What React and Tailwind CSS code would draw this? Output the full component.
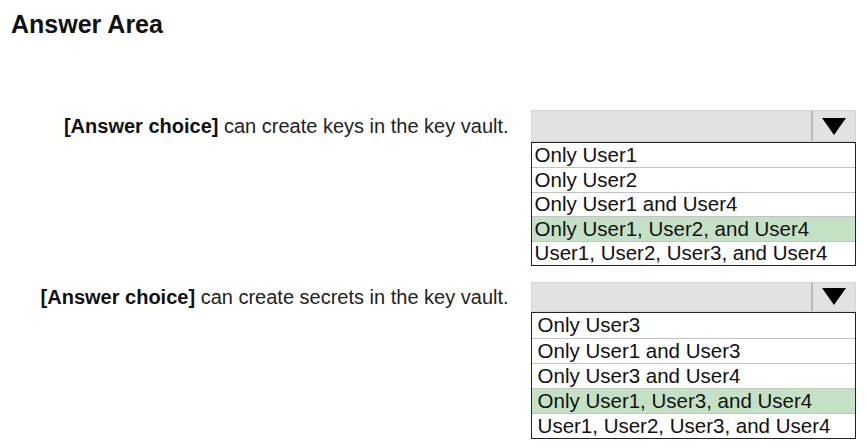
const questions = [
  {
    verb: "can create keys in the key vault.",
    options: [
      "Only User1",
      "Only User2",
      "Only User1 and User4",
      "Only User1, User2, and User4",
      "User1, User2, User3, and User4",
    ],
    selected: 3,
    pad: "pl-[3px]",
    head: "h-[32px]",
    row: "h-[24.4px]",
  },
  {
    verb: "can create secrets in the key vault.",
    options: [
      "Only User3",
      "Only User1 and User3",
      "Only User3 and User4",
      "Only User1, User3, and User4",
      "User1, User2, User3, and User4",
    ],
    selected: 3,
    pad: "pl-[6px]",
    head: "h-[30px]",
    row: "h-[25px]",
  },
];

function Dropdown({ q }) {
  return (
    <div className="w-[327px]">
      <div className={"flex border border-[#d4d4d4] bg-[#e2e2e2] " + q.head}>
        <div className="flex-1" />
        <div className="flex w-[44px] items-center justify-center border-l-2 border-[#b9b9b9]">
          <svg width="24" height="17" viewBox="0 0 24 17">
            <polygon points="0,0 24,0 12,17" fill="#000" />
          </svg>
        </div>
      </div>
      <div className="border border-[#222] bg-white">
        {q.options.map((opt, i) => (
          <div
            key={opt}
            className={
              "flex items-center text-[20.5px] leading-none text-[#111] " +
              q.row +
              " " +
              q.pad +
              " " +
              (i > 0 ? "border-t border-[#c4c4c4] " : "") +
              (i === q.selected ? "bg-[#c5e1c5]" : "")
            }
          >
            {opt}
          </div>
        ))}
      </div>
    </div>
  );
}

export default function App() {
  return (
    <main
      className="h-[448px] w-[867px] bg-white px-[11px] pt-[9px]"
      style={{ fontFamily: '"Liberation Sans", Arial, sans-serif' }}
    >
      <h1 className="text-[25px] font-bold leading-[30px] text-[#111]">
        Answer Area
      </h1>

      <div className="mt-[71px] flex flex-col gap-[16px]">
        {questions.map((q) => (
          <div key={q.verb} className="flex items-start gap-[22px]">
            <div
              className={
                "flex w-[500px] items-center justify-end text-[20px] text-[#222] " +
                q.head
              }
            >
              <span className="whitespace-nowrap">
                <span className="font-bold text-[#111]">[Answer choice]</span>{" "}
                {q.verb}
              </span>
            </div>
            <Dropdown q={q} />
          </div>
        ))}
      </div>
    </main>
  );
}
